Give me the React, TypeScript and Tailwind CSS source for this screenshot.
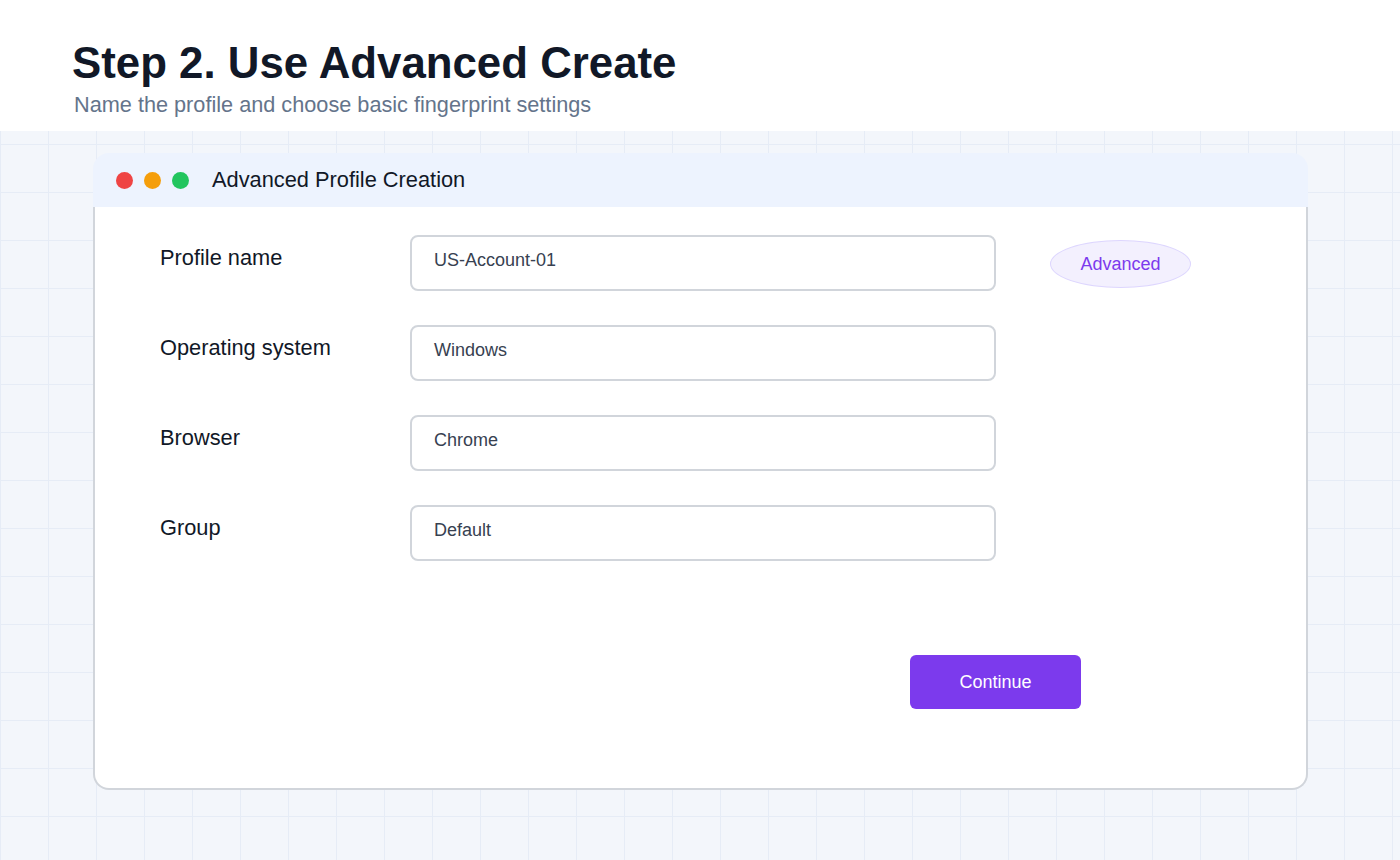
const fields = [
  { label: "Profile name", value: "US-Account-01" },
  { label: "Operating system", value: "Windows" },
  { label: "Browser", value: "Chrome" },
  { label: "Group", value: "Default" },
];

function Field({ label, value, badge }: { label: string; value: string; badge?: boolean }) {
  return (
    <div className="flex items-start">
      <div className="w-[250px] pt-[9px] text-[21.8px] leading-[28px] text-[#111827]">{label}</div>
      <div className="h-[56px] w-[586px] rounded-lg border-2 border-[#d1d5db] bg-white pl-[22px] pt-[11px] text-[18px] leading-[24px] text-[#374151]">
        {value}
      </div>
      {badge && (
        <div className="ml-[54px] mt-[5px] flex h-[48px] w-[141px] items-center justify-center rounded-[50%] border border-[#ddd6fe] bg-[#f3f0fe] text-[18px] text-[#7c3aed]">
          Advanced
        </div>
      )}
    </div>
  );
}

export default function App() {
  return (
    <div
      className="min-h-screen bg-[#f3f6fb] font-['Liberation_Sans',Arial,sans-serif]"
      style={{
        backgroundImage:
          "linear-gradient(to right, #e6ecf6 1px, transparent 1px), linear-gradient(to bottom, #e6ecf6 1px, transparent 1px)",
        backgroundSize: "48px 48px",
      }}
    >
      <header className="h-[131px] bg-white pl-[72px] pt-[41px]">
        <h1 className="text-[43.8px] font-bold leading-none text-[#111827]">Step 2. Use Advanced Create</h1>
        <p className="ml-[2px] mt-[6px] text-[21.7px] leading-[28px] text-[#64748b]">
          Name the profile and choose basic fingerprint settings
        </p>
      </header>

      <main className="pb-[70px] pt-[22px]">
        <div className="ml-[93px] w-[1215px]">
          <div className="flex h-[54px] items-center rounded-t-[16px] bg-[#edf3fe] pl-[23px]">
            <div className="flex gap-[11px]">
              <span className="h-[17px] w-[17px] rounded-full bg-[#ef4444]" />
              <span className="h-[17px] w-[17px] rounded-full bg-[#f59e0b]" />
              <span className="h-[17px] w-[17px] rounded-full bg-[#22c55e]" />
            </div>
            <span className="ml-[23px] text-[21.8px] text-[#111827]">Advanced Profile Creation</span>
          </div>
          <div className="rounded-b-[16px] border-2 border-t-0 border-[#d1d5db] bg-white pb-[79px] pl-[65px] pt-[28px]">
            <div className="flex flex-col gap-[34px]">
              {fields.map((f, i) => (
                <Field key={f.label} label={f.label} value={f.value} badge={i === 0} />
              ))}
            </div>
            <div className="mt-[94px] pl-[750px]">
              <button className="h-[54px] w-[171px] rounded-[6px] bg-[#7c3aed] text-[18px] text-white">
                Continue
              </button>
            </div>
          </div>
        </div>
      </main>
    </div>
  );
}
